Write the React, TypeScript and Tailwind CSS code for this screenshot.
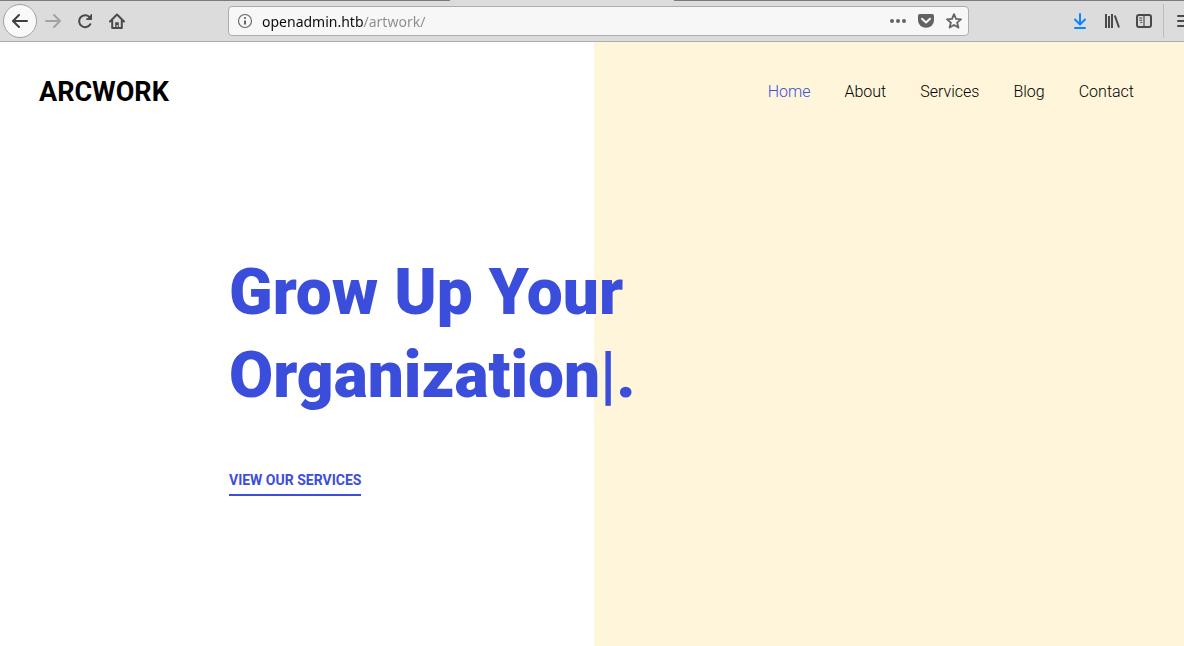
import type { ReactNode } from "react";

function ToolButton({ label, children, disabled }: { label: string; children: ReactNode; disabled?: boolean }) {
  return (
    <button
      type="button"
      aria-label={label}
      disabled={disabled}
      className="flex h-8 w-8 shrink-0 items-center justify-center text-[#4a4a4b] disabled:text-[#a3a3a3]"
    >
      {children}
    </button>
  );
}

function Icon({ children, className }: { children: ReactNode; className?: string }) {
  return (
    <svg viewBox="0 0 16 16" width="16" height="16" fill="none" stroke="currentColor" strokeWidth="2" strokeLinecap="round" strokeLinejoin="round" aria-hidden="true" className={className}>
      {children}
    </svg>
  );
}

function BrowserBar() {
  return (
    <header className="border-b border-[#adadad] bg-[#dcdcdc]">
      <div className="flex h-px">
        <div className="w-[450px] bg-[#7d7a7d]" />
        <div className="w-[224px]" />
        <div className="flex-1 bg-[#7d7a7d]" />
      </div>
      <div className="flex h-10 items-center pl-[3px]">
        <button type="button" aria-label="Back" className="flex h-[34px] w-[34px] shrink-0 items-center justify-center rounded-full border border-[#a2a2a2] bg-[#f9f9f9] text-[#3e3e3f]">
          <Icon>
            <path d="M7 2 1 8l6 6M1.5 8H15" />
          </Icon>
        </button>
        <ToolButton label="Forward" disabled>
          <Icon>
            <path d="M9 2l6 6-6 6M14.500 8H1" />
          </Icon>
        </ToolButton>
        <ToolButton label="Reload">
          <Icon>
            <path d="M13.300 11.200A6 6 0 1 1 12.400 3.900" />
            <path d="M14.800 1v5.800H9z" fill="currentColor" stroke="none" />
            <path d="M14.300 1.800V6H10" strokeWidth="1.400" />
          </Icon>
        </ToolButton>
        <ToolButton label="Home">
          <Icon>
            <path d="M1 8.500 8 1.500l7 7M3.200 7.500V15h9.600V7.500" />
            <path d="M6.200 9.200h3.600V14H8.800v-2H7.600v2H6.200z" fill="currentColor" stroke="none" />
          </Icon>
        </ToolButton>
        <div className="ml-[95px] flex h-[30px] min-w-0 flex-1 items-center rounded-[4px] border border-[#adadad] bg-[#f7f7f7] text-[#636364]">
          <button type="button" aria-label="Site information" className="ml-2 shrink-0">
            <Icon>
              <circle cx="8" cy="8" r="6.500" strokeWidth="1.100" />
              <path d="M8 7.500v4" strokeLinecap="butt" />
              <circle cx="8" cy="5" r="1.100" fill="currentColor" stroke="none" />
            </Icon>
          </button>
          <input
            type="text"
            aria-label="Address"
            defaultValue="openadmin.htb/artwork/"
            className="ml-[9px] h-7 min-w-0 flex-1 bg-[linear-gradient(to_right,#0c0c0d_101px,#8b8b8b_101px)] bg-clip-text font-['Noto_Sans',sans-serif] text-[14px] text-transparent outline-none"
          />
          <div className="flex items-center gap-3 pr-[6px]">
            <button type="button" aria-label="Page actions">
              <Icon>
                <g fill="currentColor" stroke="none">
                  <circle cx="2" cy="8" r="2" />
                  <circle cx="8" cy="8" r="2" />
                  <circle cx="14" cy="8" r="2" />
                </g>
              </Icon>
            </button>
            <button type="button" aria-label="Save to Pocket">
              <Icon>
                <path d="M1.800 1h12.400A1.800 1.800 0 0 1 16 2.800V7.500a8 7.300 0 0 1-16 0V2.800A1.800 1.800 0 0 1 1.800 1z" fill="currentColor" stroke="none" />
                <path d="M4 5.800l4 3.700 4-3.700" stroke="#f7f7f7" />
              </Icon>
            </button>
            <button type="button" aria-label="Bookmark this page">
              <Icon>
                <path d="M8 1.200l2 4.700 5 .4-3.900 3.300 1.300 5L8 11.900l-4.400 2.700 1.300-5L1 6.300l5-.4z" strokeWidth="1.800" />
              </Icon>
            </button>
          </div>
        </div>
        <div className="ml-[95px] flex shrink-0 items-center">
          <ToolButton label="Downloads">
            <Icon className="text-[#0a84ff]">
              <path d="M8 1v10M3 6.500l5 5 5-5M3 15h10" />
            </Icon>
          </ToolButton>
          <ToolButton label="Library">
            <Icon>
              <path d="M2 1v14M5 3v12M8 1v14M10.800 2.500l4.200 12" strokeLinecap="butt" />
            </Icon>
          </ToolButton>
          <ToolButton label="Sidebars">
            <Icon>
              <rect x="1" y="2" width="14" height="12" rx="2" />
              <path d="M8 2v12" strokeWidth="1.200" />
              <path d="M3.200 5h3M3.200 7.200h3M4.200 9.400h2" strokeWidth="1" strokeLinecap="butt" />
            </Icon>
          </ToolButton>
          <div className="ml-[3px] h-[34px] w-px bg-[#bcbcbc]" />
          <button type="button" aria-label="Open menu" className="w-5 overflow-hidden pl-[13px] text-[#4a4a4b]">
            <Icon className="max-w-none">
              <path d="M1 3h14M1 8h14M1 13h14" />
            </Icon>
          </button>
        </div>
      </div>
    </header>
  );
}

const links = ["Home", "About", "Services", "Blog", "Contact"];

export default function App() {
  return (
    <div className="flex min-h-screen flex-col overflow-hidden bg-white font-[Roboto,sans-serif]">
      <BrowserBar />
      <div className="flex-1 bg-[linear-gradient(to_right,#ffffff_calc(50%+2px),#fff5da_calc(50%+2px))]">
        <div className="flex items-center justify-between pt-[29px] pr-[50px] pl-[39px]">
          <a href="#top" className="text-[27px] leading-[42px] font-bold text-black">
            ARCWORK
          </a>
          <nav aria-label="Main" className="flex gap-[34px] text-base font-light">
            {links.map((link) => (
              <a key={link} href={`#${link.toLowerCase()}`} className={link === "Home" ? "text-[#3b4edb]" : "text-black"}>
                {link}
              </a>
            ))}
          </nav>
        </div>
        <main className="px-[229px] pt-[138px]">
          <h1 className="text-[64px] leading-[83px] font-black text-[#3b4edb]">
            Grow Up Your
            <br />
            Organization<span className="font-bold">|</span>.
          </h1>
          <a href="#services" className="mt-[50px] inline-block border-b-2 border-[#3b4edb] pb-px text-sm leading-[26px] font-bold text-[#3b4edb] uppercase">
            View our services
          </a>
        </main>
      </div>
    </div>
  );
}
